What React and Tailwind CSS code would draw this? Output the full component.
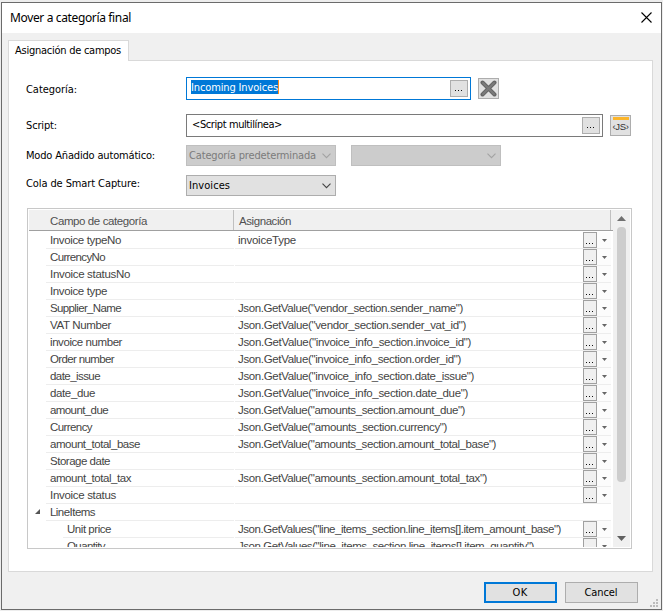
import { useLayoutEffect, useRef } from "react";
import clsx from "clsx";

const rows = [
  { name: "Invoice typeNo", nw: 71, value: "invoiceType", vw: 58 },
  { name: "CurrencyNo", nw: 55 },
  { name: "Invoice statusNo", nw: 80 },
  { name: "Invoice type", nw: 57 },
  { name: "Supplier_Name", nw: 71, value: 'Json.GetValue("vendor_section.sender_name")', vw: 225 },
  { name: "VAT Number", nw: 61, value: 'Json.GetValue("vendor_section.sender_vat_id")', vw: 228 },
  { name: "invoice number", nw: 72, value: 'Json.GetValue("invoice_info_section.invoice_id")', vw: 233 },
  { name: "Order number", nw: 64, value: 'Json.GetValue("invoice_info_section.order_id")', vw: 223 },
  { name: "date_issue", nw: 50, value: 'Json.GetValue("invoice_info_section.date_issue")', vw: 236 },
  { name: "date_due", nw: 45, value: 'Json.GetValue("invoice_info_section.date_due")', vw: 230 },
  { name: "amount_due", nw: 58, value: 'Json.GetValue("amounts_section.amount_due")', vw: 227 },
  { name: "Currency", nw: 42, value: 'Json.GetValue("amounts_section.currency")', vw: 209 },
  { name: "amount_total_base", nw: 90, value: 'Json.GetValue("amounts_section.amount_total_base")', vw: 258 },
  { name: "Storage date", nw: 60 },
  { name: "amount_total_tax", nw: 81, value: 'Json.GetValue("amounts_section.amount_total_tax")', vw: 249 },
  { name: "Invoice status", nw: 66 },
  { name: "LineItems", nw: 45, group: true },
  { name: "Unit price", nw: 44, child: true, value: 'Json.GetValues("line_items_section.line_items[].item_amount_base")', vw: 323 },
  { name: "Quantity", nw: 38, child: true, value: 'Json.GetValues("line_items_section.line_items[].item_quantity")', vw: 296 },
];

// Text tracked in or out to fill a given width
function Fit({ width, className = "", children }) {
  const ref = useRef(null);

  useLayoutEffect(() => {
    const el = ref.current;
    el.style.letterSpacing = "0px";
    const natural = el.getBoundingClientRect().width;
    el.style.letterSpacing = `${(width - natural) / children.length}px`;
  }, [width, children]);

  return (
    <span ref={ref} className={`inline-block whitespace-pre ${className}`}>
      {children}
    </span>
  );
}

function Dots({ className = "" }) {
  return (
    <svg className={className} width="8" height="2" viewBox="0 0 8 2" shapeRendering="crispEdges">
      <path d="M0 0h1v1h-1zM3 0h1v1h-1zM6 0h1v1h-1z" fill="#111" />
    </svg>
  );
}

function BrowseButton() {
  return (
    <button className="flex h-[17px] w-[18px] items-end justify-center border border-[#adadad] bg-[#e1e1e1] pb-1">
      <Dots />
    </button>
  );
}

function Select({ children, width, disabled = false }) {
  return (
    <div
      className={clsx(
        "flex h-[21px] w-[150px] items-center justify-between border pr-1 pl-[2px]",
        disabled ? "border-[#bfbfbf] bg-[#cccccc] text-[#7b7b7b]" : "border-[#adadad] bg-[#e1e1e1] text-black"
      )}
    >
      {children ? (
        <Fit width={width} className="pt-px">
          {children}
        </Fit>
      ) : (
        <span />
      )}
      <svg width="9" height="6" viewBox="0 0 9 6" fill="none">
        <path d="M.5 .7l4 4l4-4" stroke={disabled ? "#a3a3a3" : "#444"} strokeWidth="1.1" />
      </svg>
    </div>
  );
}

function Row({ row }) {
  return (
    <div className="flex h-[17px] shrink-0 text-[11.5px] leading-[16px] text-[#444]">
      <div className="flex w-[17px] items-center justify-end pr-[6px] pb-[3px]">
        {row.group && (
          <svg width="5" height="5" viewBox="0 0 5 5">
            <path d="M5 0v5h-5z" fill="#555" />
          </svg>
        )}
      </div>
      {row.child && <div className="w-[17px]" />}
      <div className="mr-px min-w-0 flex-1 border-b border-[#ededed] pl-1">
        <Fit width={row.nw}>{row.name}</Fit>
      </div>
      <div className="flex w-[376px] border-b border-[#ededed]">
        <div className="w-[348px] shrink-0 pl-[3px]">{row.value && <Fit width={row.vw}>{row.value}</Fit>}</div>
        {!row.group && (
          <>
            <div className="flex h-4 w-[14px] shrink-0 items-end justify-center border border-[#a0a0a0] bg-[#f0f0f0] pb-[2px]">
              <Dots />
            </div>
            <div className="flex flex-1 items-center bg-[#fcfcfc] pl-[5px]">
              <svg width="5" height="3" viewBox="0 0 5 3">
                <path d="M0 0h5l-2.5 3z" fill="#666" />
              </svg>
            </div>
          </>
        )}
      </div>
    </div>
  );
}

function FieldTable() {
  return (
    <div className="flex h-[341px] w-[605px] border border-[#c8c8c8] bg-white p-px font-['Liberation_Sans',sans-serif]">
      <div className="flex h-[337px] w-[584px] flex-col overflow-hidden">
        <div className="flex h-[21px] shrink-0 border-b border-[#a0a0a0] bg-[#f0f0f0] text-[11.5px] leading-[22px] text-[#505050]">
          <div className="w-[205px] border-r border-[#c0c0c0] pl-[21px]">
            <Fit width={97}>Campo de categoría</Fit>
          </div>
          <div className="w-[377px] border-r border-[#c0c0c0] pl-[5px]">
            <Fit width={52}>Asignación</Fit>
          </div>
        </div>
        <div className="mt-px flex w-[582px] flex-col">
          {rows.map((row) => (
            <Row key={row.name} row={row} />
          ))}
        </div>
      </div>
      <div className="flex w-[17px] flex-col items-center bg-[#f0f0f0] pt-[6px] pb-[6px]">
        <svg width="9" height="5" viewBox="0 0 9 5">
          <path d="M0 5h9l-4.5-5z" fill="#707070" />
        </svg>
        <div className="mt-[6px] h-[255px] w-[9px] rounded-[4px] bg-[#cdcdcd]" />
        <svg className="mt-auto" width="9" height="5" viewBox="0 0 9 5">
          <path d="M0 0h9l-4.5 5z" fill="#606060" />
        </svg>
      </div>
    </div>
  );
}

function ResizeGrip() {
  return (
    <svg className="absolute right-[3px] bottom-[2px]" width="8" height="8" viewBox="0 0 8 8" shapeRendering="crispEdges">
      <path d="M6 0h2v2h-2zM3 3h2v2h-2zM6 3h2v2h-2zM0 6h2v2h-2zM3 6h2v2h-2zM6 6h2v2h-2z" fill="#bcbcbc" />
    </svg>
  );
}

export default function App() {
  return (
    <div className="h-[611px] w-[663px] overflow-hidden bg-[#ededed] pt-[2px] pl-px font-['DejaVu_Sans_Condensed','DejaVu_Sans',sans-serif] text-[11px] leading-[14px] text-black">
      <div className="relative flex h-[608px] w-[661px] flex-col border border-[#6b6b6b] bg-[#f0f0f0]">
        <header className="flex h-[30px] shrink-0 items-center justify-between bg-white pr-[9px] pl-2">
          <Fit width={121} className="font-['Noto_Sans',sans-serif] text-[12px] leading-[18px]">
            Mover a categoría final
          </Fit>
          <svg width="11" height="11" viewBox="0 0 11 11" className="mb-px">
            <path d="M.5 .5l10 10M10.500 .5l-10 10" stroke="#000" strokeWidth="1.1" />
          </svg>
        </header>

        <main className="mt-[7px] ml-[6px] w-[645px]">
          <div className="flex">
            <div className="relative z-10 -mb-px flex h-[21px] w-[121px] border border-b-0 border-[#d9d9d9] bg-white pt-[3px] pl-[6px]">
              <Fit width={106}>Asignación de campos</Fit>
            </div>
          </div>

          <div className="h-[512px] border border-[#d9d9d9] bg-white pt-4 pl-[17px]">
            <div className="flex h-[23px] items-center">
              <div className="w-[160px] pt-[2px]">
                <Fit width={51}>Categoría:</Fit>
              </div>
              <div className="flex h-[23px] w-[285px] justify-between border border-[#0078d7] p-[2px] pl-1">
                <span className="flex h-[14px] border-r border-[#ff8c1a] bg-[#0078d7] text-white">
                  <Fit width={87} className="leading-[15px]">
                    Incoming Invoices
                  </Fit>
                </span>
                <BrowseButton />
              </div>
              <button className="ml-[7px] flex h-[21px] w-[21px] items-center justify-center border border-[#adadad] bg-[#e1e1e1]">
                <svg width="17" height="17" viewBox="0 0 17 17">
                  <path d="M2.500 2.500l12 12M14.500 2.500l-12 12" stroke="#666" strokeWidth="4" strokeLinecap="round" />
                  <path d="M3 3l11 11M14 3l-11 11" stroke="#7b7b7b" strokeWidth="2" strokeLinecap="round" />
                </svg>
              </button>
            </div>

            <div className="mt-[14px] flex h-[23px] items-center">
              <div className="w-[160px]">
                <Fit width={31}>Script:</Fit>
              </div>
              <div className="flex h-[23px] w-[417px] justify-between border border-[#7a7a7a] p-[2px] pl-[5px]">
                <Fit width={90} className="pt-px">
                  {"<Script multilínea>"}
                </Fit>
                <BrowseButton />
              </div>
              <button className="ml-[7px] flex h-[21px] w-[21px] flex-col items-center border border-[#adadad] bg-[#e1e1e1] pt-px">
                <span className="h-[3px] w-4 shrink-0 bg-[#fbb52b]" />
                <Fit width={16} className="font-['Liberation_Sans',sans-serif] text-[9.5px] leading-[13px] text-[#303030]">
                  {"‹JS›"}
                </Fit>
              </button>
            </div>

            <div className="mt-2 flex h-[21px] items-center">
              <div className="w-[160px]">
                <Fit width={129}>Modo Añadido automático:</Fit>
              </div>
              <div className="flex gap-[15px]">
                <Select disabled width={127}>
                  Categoría predeterminada
                </Select>
                <Select disabled />
              </div>
            </div>

            <div className="mt-[9px] flex h-[21px] items-center">
              <div className="w-[160px] pb-[4px]">
                <Fit width={114}>Cola de Smart Capture:</Fit>
              </div>
              <Select width={41}>Invoices</Select>
            </div>

            <div className="mt-3 ml-px">
              <FieldTable />
            </div>
          </div>
        </main>

        <footer className="mt-[10px] flex gap-2 pl-[482px]">
          <button className="flex h-[21px] w-[73px] items-center justify-center border-2 border-[#0078d7] bg-[#e1e1e1] pr-px">
            <Fit width={15} className="pt-px">
              OK
            </Fit>
          </button>
          <button className="flex h-[21px] w-[73px] items-center justify-center border border-[#adadad] bg-[#e1e1e1] pr-px">
            <Fit width={33} className="pt-px">
              Cancel
            </Fit>
          </button>
        </footer>
        <ResizeGrip />
      </div>
    </div>
  );
}
